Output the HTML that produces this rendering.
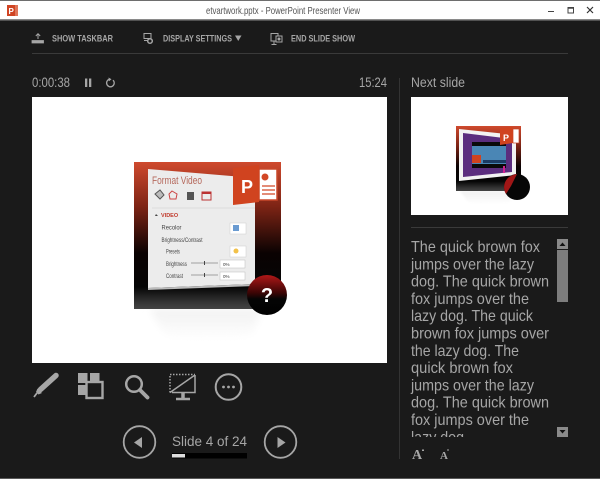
<!DOCTYPE html>
<html><head><meta charset="utf-8"><title>Presenter View</title>
<style>html,body{margin:0;padding:0;background:#1a1a1a;width:600px;height:479px;overflow:hidden}svg{display:block}
text{font-family:"Liberation Sans",sans-serif;fill:#a6a6a6}</style></head><body>
<svg width="600" height="479" viewBox="0 0 600 479" xmlns="http://www.w3.org/2000/svg">
<defs>
<linearGradient id="r" x1="0" y1="0" x2="0" y2="1"><stop offset="0" stop-color="#cf4a2e"/><stop offset=".3" stop-color="#7e2415"/><stop offset=".62" stop-color="#0a0202"/><stop offset=".85" stop-color="#050505"/><stop offset=".95" stop-color="#333"/><stop offset="1" stop-color="#444"/></linearGradient>
<linearGradient id="c" x1="0" y1="0" x2="0" y2="1"><stop offset="0" stop-color="#b01818"/><stop offset=".45" stop-color="#3a0505"/><stop offset=".6" stop-color="#050505"/><stop offset="1" stop-color="#000"/></linearGradient>
<linearGradient id="sh" x1="0" y1="0" x2="0" y2="1"><stop offset="0" stop-color="#f1f1f1"/><stop offset="1" stop-color="#fff"/></linearGradient>
<filter id="b"><feGaussianBlur stdDeviation=".35"/></filter>
<filter id="b1"><feGaussianBlur stdDeviation="1"/></filter>
<filter id="b2"><feGaussianBlur stdDeviation="4"/></filter>
<clipPath id="n"><rect x="405" y="235" width="150" height="202"/></clipPath>
</defs>
<rect width="600" height="479" fill="#1a1a1a"/>
<!-- title bar -->
<rect width="600" height="20" fill="#fff"/>
<rect width="600" height="1" fill="#6e6e6e"/>
<rect y="19" width="600" height="1.500" fill="#8a8a8a"/>
<rect y="478" width="600" height="1" fill="#5a5a5a"/>
<rect x="7" y="5" width="11" height="11" fill="#e0765a"/>
<rect x="7" y="5" width="8" height="11" fill="#d04423"/>
<text x="8.500" y="14" font-size="8" font-weight="bold" style="fill:#fff">P</text>
<text x="206" y="14" font-size="10.500" textLength="154" lengthAdjust="spacingAndGlyphs" style="fill:#555">etvartwork.pptx - PowerPoint Presenter View</text>
<path d="M548 11.500h6" stroke="#444" stroke-width="1"/>
<rect x="568" y="7.500" width="5.500" height="5.500" fill="none" stroke="#444"/><path d="M568 8h6" stroke="#444" stroke-width="1.500"/>
<path d="M587 7l6 6M593 7l-6 6" stroke="#333" stroke-width="1.200"/>
<!-- toolbar -->
<g fill="none" stroke="#a6a6a6">
<path d="M32 40.500h11.500v2.500h-11.500z" fill="#a6a6a6" stroke-width=".8"/><path d="M38 39v-5M35.800 36l2.200-2.300 2.200 2.300" stroke-width="1"/>
<path d="M144 33.500h7v5h-7zM144 40.500h4" stroke-width="1"/><circle cx="150" cy="41" r="2.300" stroke-width="1.500"/>
<path d="M271 33.500h7v7.500h-7zM274 41v3M271.500 44.500h5" stroke-width="1"/><rect x="276" y="36" width="6" height="6" fill="#1a1a1a" stroke-width="1"/><circle cx="279" cy="39" r="1.500" fill="#a6a6a6" stroke="none"/>
</g>
<g font-size="9" font-weight="bold">
<text x="52" y="41.500" textLength="61" lengthAdjust="spacingAndGlyphs">SHOW TASKBAR</text>
<text x="163" y="41.500" textLength="69" lengthAdjust="spacingAndGlyphs">DISPLAY SETTINGS</text>
<text x="291" y="41.500" textLength="64" lengthAdjust="spacingAndGlyphs">END SLIDE SHOW</text>
</g>
<path d="M235 35.500h6.500l-3.250 5.500z" fill="#a6a6a6"/>
<rect x="32" y="53" width="536" height="1" fill="#3a3a3a"/>
<!-- timer -->
<text x="32" y="87" font-size="13.500" textLength="38" lengthAdjust="spacingAndGlyphs">0:00:38</text>
<rect x="85" y="78.500" width="2.300" height="8.500" fill="#a6a6a6"/><rect x="89" y="78.500" width="2.300" height="8.500" fill="#a6a6a6"/>
<path d="M113 80.200a3.800 3.800 0 1 1-3-1" fill="none" stroke="#a6a6a6" stroke-width="1.300"/><path d="M108.500 77.500l3 1.700-2.500 2z" fill="#a6a6a6"/>
<text x="359" y="87" font-size="13.500" textLength="28" lengthAdjust="spacingAndGlyphs">15:24</text>
<text x="411" y="87" font-size="13.500" textLength="54" lengthAdjust="spacingAndGlyphs">Next slide</text>
<rect x="399" y="78" width="1" height="381" fill="#333"/>
<!-- main slide -->
<rect x="32" y="97" width="355" height="266" fill="#fff"/>
<path d="M150 309H262L252 335Q205 345 165 335z" fill="url(#sh)" filter="url(#b2)"/>
<rect x="134" y="162" width="147" height="147" fill="url(#r)"/>
<g filter="url(#b)">
<path d="M148 169L255 178V284L148 288z" fill="#ececec"/>
<path d="M148 288L255 284V286L148 290z" fill="#bbb"/>
<text x="152" y="184" font-size="11" textLength="50" lengthAdjust="spacingAndGlyphs" style="fill:#b5685c">Format Video</text>
<path d="M155 194l5-4 4 5-4 4z" fill="#bbb" stroke="#555"/>
<path d="M172 191l5 3-1 5h-6l-1-5z" fill="none" stroke="#c44" stroke-width="1"/>
<rect x="187" y="192" width="7" height="8" fill="#555"/>
<rect x="202" y="192" width="9" height="8" fill="none" stroke="#b33" stroke-width="1"/><rect x="202" y="192" width="9" height="2" fill="#b33"/>
<path d="M152 208H255" stroke="#ccc" stroke-width=".6"/>
<text x="161" y="217" font-size="5.500" font-weight="bold" style="fill:#c0392b">VIDEO</text>
<path d="M156 214l2 2h-3z" fill="#444"/>
<g font-size="6">
<text x="161.500" y="229.500" textLength="20" lengthAdjust="spacingAndGlyphs" style="fill:#444">Recolor</text>
<text x="161.500" y="242" textLength="41" lengthAdjust="spacingAndGlyphs" style="fill:#444">Brightness/Contrast</text>
<text x="166" y="253.500" textLength="14" lengthAdjust="spacingAndGlyphs" style="fill:#444">Presets</text>
<text x="166" y="266" textLength="21" lengthAdjust="spacingAndGlyphs" style="fill:#444">Brightness</text>
<text x="166" y="278" textLength="17" lengthAdjust="spacingAndGlyphs" style="fill:#444">Contrast</text></g>
<rect x="230" y="223" width="16" height="11" fill="#fff" stroke="#ccc" stroke-width=".5"/><rect x="233" y="225" width="6" height="6" fill="#6a9bd1"/>
<rect x="230" y="246" width="16" height="11" fill="#fff" stroke="#ccc" stroke-width=".5"/><circle cx="236" cy="251" r="2.500" fill="#f2c14a"/>
<path d="M191 263h27M191 275h27" stroke="#888" stroke-width=".7"/><path d="M204.500 261v4M204.500 273v4" stroke="#444"/>
<rect x="220" y="260" width="25" height="8" fill="#fff" stroke="#bbb" stroke-width=".5"/>
<rect x="220" y="272" width="25" height="8" fill="#fff" stroke="#bbb" stroke-width=".5"/>
<text x="223" y="266" font-size="4.500" style="fill:#333">0%</text>
<text x="223" y="278" font-size="4.500" style="fill:#333">0%</text>
</g>
<rect x="259" y="169" width="18" height="31" fill="#fff" stroke="#c8482a" stroke-width="1.500"/>
<circle cx="265" cy="177" r="3.500" fill="#d24726"/><path d="M262 186h13M262 190h13M262 194h13" stroke="#d24726" stroke-width="1.200"/>
<path d="M233 168L259 165V202L233 205z" fill="#d0431f"/>
<text x="241" y="193" font-size="18" font-weight="bold" style="fill:#fff">P</text>
<circle cx="267" cy="295" r="20" fill="url(#c)"/>
<text x="267" y="302" font-size="20" font-weight="bold" text-anchor="middle" style="fill:#fff">?</text>
<!-- next thumb -->
<rect x="411" y="97" width="157" height="118" fill="#fff"/>
<path d="M460 191H515L510 202Q488 207 468 202z" fill="url(#sh)" filter="url(#b1)"/>
<rect x="456" y="126" width="65" height="65" fill="url(#r)"/>
<path d="M459 129L516 135V175L459 181z" fill="#f2f2f2"/>
<path d="M463 133L512 139V172L463 177z" fill="#5b2d7e"/>
<rect x="472" y="142" width="34" height="26" fill="#0a0a0a"/>
<rect x="472" y="146" width="34" height="18" fill="#4a86b5"/>
<rect x="483" y="160" width="23" height="3" fill="#1b3b63"/>
<rect x="472" y="155" width="9" height="8" fill="#d0431f"/>
<rect x="503" y="166" width="2" height="7" fill="#d02090"/>
<rect x="513" y="129" width="6" height="14" fill="#fff" stroke="#c8482a" stroke-width=".7"/>
<path d="M500 128L513 127V143L500 145z" fill="#d0431f"/>
<text x="503" y="141" font-size="9" font-weight="bold" style="fill:#fff">P</text>
<circle cx="517" cy="187" r="13" fill="#060606"/>
<path d="M506 194a13 13 0 0 1 3-17q5-3 8-3l-6 12z" fill="#a01818" filter="url(#b)"/>
<rect x="411" y="227" width="157" height="1" fill="#3a3a3a"/>
<!-- notes -->
<g clip-path="url(#n)" font-size="16">
<text x="411" y="252" textLength="129" lengthAdjust="spacingAndGlyphs">The quick brown fox</text>
<text x="411" y="269.300" textLength="123" lengthAdjust="spacingAndGlyphs">jumps over the lazy</text>
<text x="411" y="286.600" textLength="138" lengthAdjust="spacingAndGlyphs">dog. The quick brown</text>
<text x="411" y="303.900" textLength="118" lengthAdjust="spacingAndGlyphs">fox jumps over the</text>
<text x="411" y="321.200" textLength="122" lengthAdjust="spacingAndGlyphs">lazy dog. The quick</text>
<text x="411" y="338.500" textLength="138" lengthAdjust="spacingAndGlyphs">brown fox jumps over</text>
<text x="411" y="355.800" textLength="108" lengthAdjust="spacingAndGlyphs">the lazy dog. The</text>
<text x="411" y="373.100" textLength="102" lengthAdjust="spacingAndGlyphs">quick brown fox</text>
<text x="411" y="390.400" textLength="123" lengthAdjust="spacingAndGlyphs">jumps over the lazy</text>
<text x="411" y="407.700" textLength="138" lengthAdjust="spacingAndGlyphs">dog. The quick brown</text>
<text x="411" y="425" textLength="118" lengthAdjust="spacingAndGlyphs">fox jumps over the</text>
<text x="411" y="442.300" textLength="53" lengthAdjust="spacingAndGlyphs">lazy dog</text>
</g>
<!-- scrollbar -->
<rect x="557" y="239" width="11" height="10" fill="#8a8a8a"/>
<path d="M559.500 246h6l-3-3.500z" fill="#111"/>
<rect x="557" y="250" width="11" height="52" fill="#7d7d7d"/>
<rect x="557" y="427" width="11" height="10" fill="#8a8a8a"/>
<path d="M559.500 430h6l-3 3.500z" fill="#111"/>
<!-- font size -->
<text x="412" y="459" font-size="14" font-weight="bold" style="font-family:'Liberation Serif',serif">A</text>
<rect x="422" y="449.500" width="2" height="1.500" fill="#a6a6a6"/>
<text x="440" y="459" font-size="11" font-weight="bold" style="font-family:'Liberation Serif',serif">A</text>
<rect x="447" y="449.500" width="2" height="1" fill="#a6a6a6"/>
<!-- tools -->
<g fill="none" stroke="#a6a6a6">
<path d="M40.500 389.500L56 375.500" stroke-width="5.500" stroke-linecap="round"/>
<path d="M37.500 388.500l4.500 4.500-3.500 1.500-2.500-2.500z" fill="#a6a6a6" stroke="none"/>
<path d="M37 393l-3 4" stroke-width="1.800"/>
<circle cx="134" cy="384" r="7.800" stroke-width="2.500"/>
<path d="M140 390l7.500 7.500" stroke-width="3.800" stroke-linecap="round"/>
<path d="M170 392.500V374.500H195" stroke-width="1.500" stroke-dasharray="1.500 1.500"/>
<path d="M170 392.500L195 375M195 375V392.500H172" stroke-width="1.500"/>
<path d="M183 392.500v6" stroke-width="3.500"/><path d="M176 399h14" stroke-width="2.500"/>
<circle cx="228.500" cy="387" r="12.800" stroke-width="2"/>
<circle cx="139.500" cy="442" r="15.800" stroke-width="1.800"/>
<circle cx="280.500" cy="442" r="15.800" stroke-width="1.800"/>
</g>
<g fill="#a6a6a6">
<rect x="78" y="373" width="9.500" height="10"/><rect x="90" y="373" width="9.500" height="10"/><rect x="78" y="385" width="9.500" height="10"/>
<circle cx="223.500" cy="387" r="1.400"/><circle cx="228.500" cy="387" r="1.400"/><circle cx="233.500" cy="387" r="1.400"/>
<path d="M134 442.500L142 437V448z"/><path d="M285.500 442.500L277.500 437V448z"/>
</g>
<rect x="85.500" y="381" width="18" height="18" fill="#1a1a1a"/>
<rect x="86.500" y="382" width="16" height="16" fill="#1a1a1a" stroke="#a6a6a6" stroke-width="2.400"/>
<!-- slide nav -->
<text x="172" y="446" font-size="13.500" textLength="75" lengthAdjust="spacingAndGlyphs">Slide 4 of 24</text>
<rect x="172" y="453" width="75" height="5.500" fill="#000"/>
<rect x="172" y="454" width="13" height="3.500" fill="#ddd"/>
</svg>
</body></html>
